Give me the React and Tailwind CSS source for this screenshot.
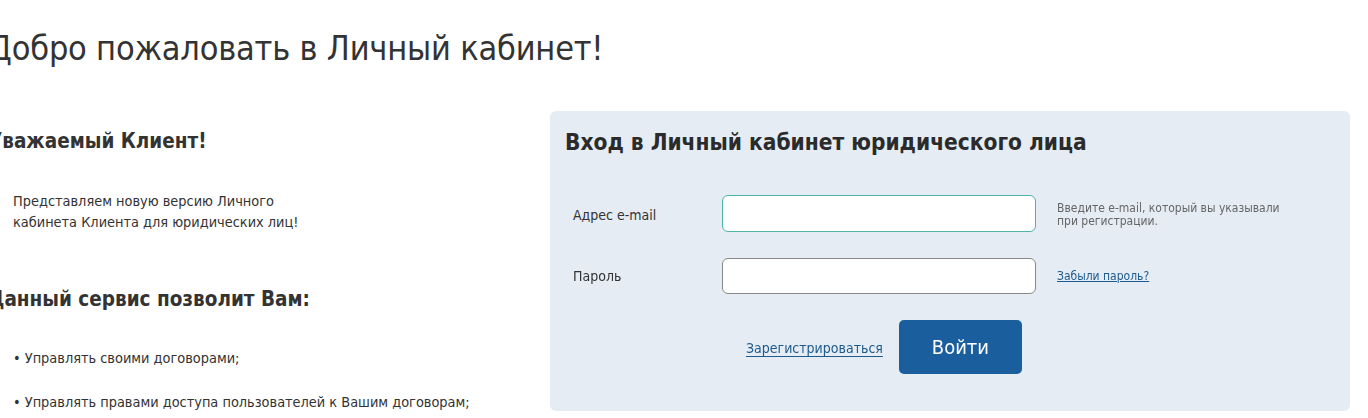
import React, { useState } from "react";

const font = { fontFamily: '"DejaVu Sans Condensed", "DejaVu Sans", sans-serif' };

const App = () => {
  const [email, setEmail] = useState("");
  const [password, setPassword] = useState("");

  return (
    <div className="w-[1368px] h-[418px] overflow-hidden bg-white text-[#333]" style={font}>
      <div className="-ml-[12px] w-[1362px]">
        {/* Заголовок */}
        <h1 className="pt-[26px] text-[34px] leading-[44px] font-normal text-[#333] tracking-[-0.2px]">
          Добро пожаловать в Личный кабинет!
        </h1>

        <div className="flex mt-[41px]">
          {/* Левая колонка */}
          <div className="w-[562px] shrink-0">
            <h2 className="pt-[16px] text-[20.5px] leading-[28px] font-bold text-[#333]">
              Уважаемый Клиент!
            </h2>
            <p className="mt-[36px] ml-[25px] text-[14.4px] leading-[21px] text-[#333]">
              Представляем новую версию Личного
              <br />
              кабинета Клиента для юридических лиц!
            </p>
            <h2 className="mt-[52px] text-[20.5px] leading-[28px] font-bold text-[#333]">
              Данный сервис позволит Вам:
            </h2>
            <ul className="mt-[35px] ml-[25px] text-[14.4px] leading-[21px] space-y-[23px]">
              <li>• Управлять своими договорами;</li>
              <li>• Управлять правами доступа пользователей к Вашим договорам;</li>
            </ul>
          </div>

          {/* Форма входа */}
          <div className="w-[800px] h-[300px] shrink-0 bg-[#e5ecf4] rounded-[6px] px-[15px] pt-[16px]">
            <h3 className="text-[22.5px] leading-[30px] font-bold text-[#2b2b2b]">
              Вход в Личный кабинет юридического лица
            </h3>

            <div className="flex items-center mt-[38px]">
              <label className="w-[157px] pl-[8px] pt-[3px] text-[14px] text-[#333]">Адрес e-mail</label>
              <input
                type="text"
                autoFocus
                value={email}
                onChange={(e) => setEmail(e.target.value)}
                className="w-[314px] h-[37px] bg-white border border-[#4fb3a6] rounded-[6px] px-2 outline-none caret-[#222]"
              />
              <div className="ml-[21px] pt-[2px] text-[12px] leading-[13px] text-[#666]">
                Введите e-mail, который вы указывали
                <br />
                при регистрации.
              </div>
            </div>

            <div className="flex items-center mt-[26px]">
              <label className="w-[157px] pl-[8px] text-[14px] text-[#333]">Пароль</label>
              <input
                type="password"
                value={password}
                onChange={(e) => setPassword(e.target.value)}
                className="w-[314px] h-[36px] bg-white border border-[#888] rounded-[6px] px-2 outline-none"
              />
              <a href="#" className="ml-[21px] text-[12px] text-[#1d5a8e] underline">
                Забыли пароль?
              </a>
            </div>

            <div className="flex items-center mt-[26px] ml-[181px]">
              <a href="#" className="mt-[2px] text-[14px] text-[#1d5a8e] underline underline-offset-[3px]">
                Зарегистрироваться
              </a>
              <button
                type="button"
                className="ml-[16px] w-[123px] h-[54px] bg-[#1b5e9e] text-white text-[20px] rounded-[5px]"
              >
                Войти
              </button>
            </div>
          </div>
        </div>
      </div>
    </div>
  );
};

export default App;
